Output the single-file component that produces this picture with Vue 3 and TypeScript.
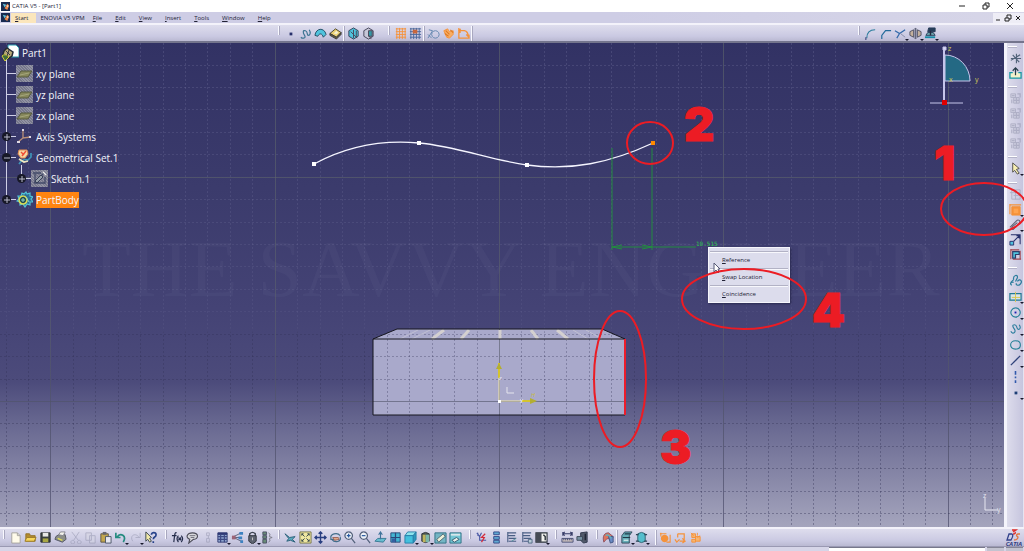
<script setup lang="ts">
type Shape = [d: string, fill?: string, stroke?: string, width?: number]
interface Tool { label: string; shapes: Shape[]; faded?: boolean; more?: boolean }
interface Group { tools: Tool[]; kind?: 'plain' | 'line'; }

const N = 'none'
const navy = '#27306b'
const teal = '#2b7d9d'
const cyan = '#4fc3dd'
const orange = '#f5923a'
const grey = '#8d8fa8'

const t = (label: string, shapes: Shape[], more = false, faded = false): Tool => ({ label, shapes, more, faded })

const box: Shape[] = [
  ['M2 2H7V6H2ZM5 6H11V12H5Z', '#c9cad9', grey],
  ['M9 2H12V6M3 8V12M5 9H11M8 6V12M3 4H6', N, grey, 1.3],
]
const gears: Shape[] = [
  ['M3 3h4v4H3zM7 6h5v5H7zM3 9h4v3H3z', '#f7b56f', orange],
  ['M2 2l3 3M9 2v3M12 5l-3 2', N, orange],
]

const topLeft: Group[] = [
  { tools: [
    t('Point', [['M6 6h3v3H6z', navy]]),
    t('Spline', [['M2 11C4 13 8 12 6 9C4 6 4 3 7 4C10 5 8 9 10 9S13 6 11 3', N, '#3d7593', 1.3]]),
    t('Surface', [['M1 9C2 1 11 0 13 8L10 11C9 7 6 6 4 10Z', cyan, '#234b62']]),
    t('Solid', [['M1 7L7 2L13 6L8 11Z', '#e9cf72', '#4b4630'], ['M1 7V9L8 13L13 8V6L8 11Z', '#635d44', '#3a3a3a'], ['M5 7L8 4L10 6L8 8Z', '#f6efcd']]),
  ] },
  { kind: 'line', tools: [
    t('Isolate', [['M2 4L7 1L12 4V10L7 13L2 10Z', cyan, '#314057'], ['M7 3v9M4 5l7 7M10 4v7', '#9b836d', '#4a4458']]),
    t('Cut part', [['M2 4L7 1L12 4V10L7 13L2 10Z', '#c7c7d8', '#424257'], ['M7 4h4v6H7zM7 9l3 4', '#3597a5', '#4a4458']]),
  ] },
  { tools: [
    t('Grid', [['M2 2H13M2 5H13M2 8H13M2 11H13M3 1V13M6 1V13M9 1V13M12 1V13', N, orange]]),
    t('Snap to point', [['M1 2H13M1 5H13M1 8H13M1 11H13M2 1V13M5 1V13M8 1V13M11 1V13', N, '#4a6799'], ['M4 3h5v4H4z', '#c8663b']]),
  ] },
  { kind: 'line', tools: [
    t('Construction element', [['M1 12L6 4L2 3M9 4a4 4 0 1 0 .1 0M1 8l4 4', N, '#6084ad']]),
    t('Geometrical constraints', [['M2 4L6 2L8 5L12 4V8L8 12L5 11Z', '#f8ad63', orange], ['M4 4l4 4M9 3l3 3M3 7l4 3', N, '#df7a22', 1.2]]),
    t('Dimensional constraints', [['M2 1V12H13V9M2 4H8Q12 5 12 10M10 8L12 10L13 8M4 2L2 4L4 6', N, orange, 1.4]]),
  ] },
]

const topRight: Tool[] = [
  t('Corner', [['M3 12C3 6 6 3 12 3', N, teal, 1.2], ['M2 11v3', N, navy]]),
  t('Chamfer', [['M3 13V9L7 4H13', N, '#246b9b', 1.3]]),
  t('Trim', [['M1 4L6 7L12 3M3 12L6 7', N, '#3269aa', 1.3], ['M7 7L12 11', N, '#858aa5']], true),
  t('Mirror', [['M6 1h2v12H6z', '#63677d'], ['M1 5L5 3V11L1 9ZM13 5L9 3V11L13 9Z', '#c4b19d', '#4d5062']], true),
  t('Project', [['M5 1h7v4H4z', '#263d59', '#263d59'], ['M4 6h6l2 3H2z', '#71a9b2', '#263d59'], ['M1 11H12', N, '#198da7', 2], ['M7 4v5', N, '#222b40', 1.5]], true),
]

const side: Group[] = [
  { tools: [
    t('Sketcher', [['M2 9L12 3M4 3l7 8M2 7h11M8 2v10', N, '#52647a', 1.2]]),
    t('Exit workbench', [['M4 6H1V12H13V6H10', '#f4f1cc', '#1597a5', 1.4], ['M7 9V1M4 4L7 1L10 4', N, '#273c49', 1.3]]),
  ] },
  { tools: [
    t('View 1', box, false, true), t('View 2', box, false, true), t('View 3', box, false, true), t('View 4', box, false, true),
  ] },
  { tools: [t('Select', [['M4 1V11L6 9L9 13L11 12L8 8L11 7Z', '#f8efb2', '#4e4d49']], true)] },
  { tools: [
    t('Constraint dialog', [['M3 2h9v10H3zM1 5h11M5 8h7M7 2v10', N, grey]], false, true),
    t('Constraint', [['M3 4h9v9H3z', orange, orange], ['M1 2H13M1 1V12', N, orange, 1.3], ['M5 6h5v5H5z', '#ffa450']], true),
    t('Contact constraint', [['M1 10L8 3C10 1 13 3 11 6L5 12C3 13 2 11 4 9L9 5', N, '#606274', 1.2]], true),
    t('Fix together', [['M2 2H12V12M5 9L11 3M8 3h3v3', N, navy, 1.1], ['M1 9h4v4H1z', cyan, navy]]),
    t('Auto constraint', [['M2 2h9M2 1v11M4 12h9M12 3v9', N, '#a1434d', 1.2], ['M4 4h7v3H7v4H4z', cyan, '#303d6b', 1.3]]),
  ] },
  { tools: [
    t('Profile', [['M2 9L5 6M3 12C0 10 3 8 5 9M5 6C4 1 10 0 9 4L7 8M9 8C12 4 15 8 12 11C10 13 7 12 8 10', N, teal, 1.3]]),
    t('Rectangle', [['M1 4h12v7H1z', '#d7e3eb', '#217994', 1.3], ['M7 2v11M3 8h9', N, '#d9c74e']], true),
    t('Circle', [['M7 2a5 5 0 1 0 .1 0', N, '#268099', 1.2], ['M6 6h2v2H6z', '#1d1db1']], true),
    t('Curve', [['M2 10C4 14 8 11 6 8C4 5 3 3 6 3S8 8 10 8S13 6 11 3', N, teal, 1.2]], true),
    t('Ellipse', [['M7 3C14 3 14 12 7 12S0 3 7 3', N, '#258097', 1.2]], true),
    t('Line', [['M2 12L12 2', N, '#30437a', 1.4]], true),
    t('Axis', [['M7 1V5M7 7V9M7 11V14', N, '#3059ac', 1.7]], false),
    t('Sketch point', [['M6 6h3v3H6z', '#1d3f76']], true),
  ] },
]

const lens: Shape = ['M5 1a4 4 0 1 0 .1 0M8 8l4 5', '#edf1f7', '#52607a', 1.3]
const tree: Shape = ['M3 2h9M3 5h8M4 8h8M4 11h8M3 1v11', N, '#4a5f85', 1.2]
const bottom: Group[] = [
  { tools: [
    t('New', [['M3 2H9L12 5V13H3Z', '#fffbea', '#a4a29e'], ['M9 2V5H12', N, '#a4a29e']]),
    t('Open', [['M2 3H6L7 5H12V11H2Z', '#b38b2f', '#927127'], ['M3 7H13L11 11H1Z', '#f7d65b', '#9d7c2c']]),
    t('Save', [['M2 2H12V12H2Z', '#3b4140', '#282c30'], ['M4 2h6v4H4z', '#e8e8e6'], ['M4 8h6v4H4z', '#a9a744']]),
    t('Print', [['M2 6L5 4H12L13 9L9 12L1 9Z', '#8b8e88', '#535665'], ['M5 4L7 1H12L10 5Z', '#f4f4ed', '#85858d'], ['M4 8L9 10', N, '#e1dd57', 1.5]]),
    t('Cut', [['M3 1L10 10M11 1L5 10M4 10a2 2 0 1 0 .1 0M11 10a2 2 0 1 0 .1 0', N, grey]], false, true),
    t('Copy', [['M2 2h6v8H2zM6 5h6v8H6z', '#d7d7e4', grey]], false, true),
    t('Paste', [['M2 3h8v9H2z', '#c2a64e', '#5c5547'], ['M7 6h6v7H7z', '#e6e6ef', '#4c5468'], ['M4 1h4v3H4z', '#67666d']]),
    t('Undo', [['M2 2V7H7M3 7C7 1 14 5 10 12', N, '#238b7f', 1.8]], true),
    t('Redo', [['M12 2V7H7M11 7C7 1 0 5 4 11', N, grey]], true, true),
    t("What's this", [['M2 1V11L4 9L6 12L8 11L6 8L8 7Z', '#f2e9a9', '#37444f'], ['M8 4C8 1 13 1 13 4S10 6 10 9M10 11v2', N, '#27438b', 1.8]]),
  ] },
  { tools: [
    t('Formula', [['M6 2C4 1 4 4 3 12M1 5H6M8 5Q5 8 8 12M11 5Q14 8 11 12M8 7L11 10M11 7L8 10', N, '#252d4b', 1.3]]),
    t('Comment', [['M7 2C14 2 14 9 8 9L3 13L4 9C-1 7 1 2 7 2', '#d8d8dd', '#4b4b57', 1.2], ['M4 5H10M5 7H9', N, '#6e6e78']]),
    t('Knowledge', [['M6 2h3v3H6zM6 8h3v4H6zM8 5v3', N, grey]], false, true),
    t('Design table', [['M2 2h10v10H2z', '#8fa6d0', '#343c70'], ['M2 3h10', N, '#2d3775', 2.4], ['M2 6h10M2 9h10M5 4v8M9 4v8', N, '#3d4984', 1.3]], true),
    t('Relations', [['M3 6L11 2M3 7L10 7M3 7L11 11', N, '#5a6078'], ['M1 5h4v4H1z', '#9c6476'], ['M9 1h4v3H9zM8 6h4v3H8zM10 10h3v3h-3z', '#3d81c0']]),
    t('Lock', [['M4 6V3Q7 0 10 3V6', N, '#3d4250', 1.5], ['M3 5h8v6l-4 3-4-3z', '#5e6370', '#30343d'], ['M7 7v3', N, '#ccc']], true),
    t('Equivalent dimensions', [['M2 1h4v3H2zM2 5h4v3H2zM2 9h4v4H2z', '#688b77', '#4b5163'], ['M8 2Q11 3 9 6L12 7L9 8Q11 11 8 12', N, '#7b7b87']]),
  ] },
  { tools: [
    t('Fly', [['M1 3L6 7L12 6L9 9L12 12L7 10L3 11L5 8Z', '#58a9bd', '#2d607a']]),
    t('Fit all', [['M1 1h12v12H1z', '#eee6a0', '#777548'], ['M3 3L6 6M11 3L8 6M3 11L6 8M11 11L8 8M3 5V3H5M9 3H11V5M3 9V11H5M9 11H11V9', N, '#35454a']]),
    t('Pan', [['M7 1V13M1 7H13M5 3L7 1L9 3M5 11L7 13L9 11M3 5L1 7L3 9M11 5L13 7L11 9', N, '#293f80', 1.5]]),
    t('Rotate', [['M2 8C1 3 9 1 12 5M12 6C14 12 6 13 3 9M2 5V9H6', N, '#426d8a', 1.2], ['M4 7H10L11 9L6 10Z', '#e2a788', '#9b6458']]),
    t('Zoom in', [lens, ['M3 5H7M5 3V7', N, '#285ba1', 1.3]]),
    t('Zoom out', [lens, ['M3 5H7', N, '#285ba1', 1.3]]),
    t('Normal view', [['M1 11L4 8H13L10 12Z', '#68bdd0', '#387994'], ['M7 9V1M5 4L7 1L9 4', N, '#40739a', 1.2]]),
    t('Multi view', [['M2 2h10v10H2z', '#43b4d2', '#294778'], ['M7 2V12M2 7H12', N, '#294778', 1.3], ['M3 8h4v4H3z', '#345fa0']]),
    t('Isometric view', [['M1 5L4 1H13L10 5Z', '#8de3ec', '#287eaa'], ['M1 5H10V13H1Z', '#43c0dd', '#287eaa'], ['M10 5L13 1V9L10 13Z', '#2c98bb', '#287eaa']], true),
    t('View mode', [['M3 3Q7 0 11 3V11Q7 14 3 11Z', '#515956', '#30353b'], ['M7 4h4v8H7z', '#7cb7a9'], ['M4 4h3v8H4z', '#c0b45b']], true),
    t('Hide / show', [['M1 2h12v11H1z', '#74b5c4', '#306f83'], ['M3 9L10 3L12 6L5 12Z', '#ecefd7', '#4c6570']]),
    t('Swap visible space', [['M1 2h12v11H1z', '#72c5d3', '#306f83'], ['M3 10L8 7L11 9L6 12Z', '#e7efe8', '#355770'], ['M2 4h10', N, '#d6e6eb', 2]]),
  ] },
  { tools: [
    t('Create datum', [['M2 2L5 6L7 2M5 6V10H12M3 2v3', N, '#4b59a5', 1.2], ['M11 3L7 7H10L7 12', N, '#d42b3a', 1.3]]),
    t('Stack', [['M4 1h6v3H4zM4 6h6v3H4zM4 10h6v3H4z', '#60a9d1', '#344b89']]),
    t('Insert before', [tree, ['M7 11L12 8', N, '#58939c']]),
    t('Insert after', [tree, ['M9 9h4v4H9z', '#b9ccd8', '#536b84']]),
    t('Only current body', [['M1 2h12v10H1z', '#f2f2ee', '#2d343d', 1.2], ['M1 2h6v10H1z', '#464b55'], ['M9 4l2 2v4', N, '#2c333b', 1.5]], true),
  ] },
  { tools: [
    t('Measure between', [['M2 1V5M12 1V5M2 3H12M4 1L2 3L4 5M10 1L12 3L10 5', N, '#363b67', 1.2], ['M1 8h12v4H1z', '#cabfbd', '#495078'], ['M3 8v2M5 8v2M7 8v2M9 8v2M11 8v2', N, '#495078']]),
    t('Measure item', [['M5 2L12 1V12L8 13L5 10Z', '#51596a', '#30374c'], ['M1 6h6v4H1z', '#7892a4', '#3d4858'], ['M10 3v7', N, '#202536', 1.5]]),
  ] },
  { tools: [t('Apply material', [['M2 12C0 5 3 2 7 2L12 6L10 12C9 8 6 6 2 12Z', '#dd745e', '#8b5264'], ['M7 6L12 6V12L9 13Z', '#6a8bc5', '#405583'], ['M4 5Q7 3 10 8', N, '#63b0bc', 1.6]])] },
  { kind: 'line', tools: [
    t('Cut plane', [['M2 5L5 1H13L10 5V13H2Z', '#67aeb8', '#31495c'], ['M3 7H11M5 3h6', N, '#203a49', 1.3], ['M4 10h5', N, '#c9e4e6', 1.5]], true),
    t('Visualization', [['M3 3Q7 0 11 3V11Q7 14 3 11Z', '#55becd', '#31606f'], ['M1 4h3M10 4h3M1 11h3M10 11h3', N, '#31485a', 1.3]], true),
  ] },
  { kind: 'line', tools: [
    t('Sketch solving', [['M6 4a4 4 0 1 0 .1 0', orange], ['M1 3h7M12 4V12H8M2 2v4', N, orange, 1.2]]),
    t('Sketch analysis', [['M4 3H11V11H6M4 7V3M1 9L3 12L6 9M9 8L12 11L9 13', N, orange, 1.3]]),
    t('Animate', gears),
  ] },
]

const menus = ['File', 'Edit', 'View', 'Insert', 'Tools', 'Window', 'Help']
const popup = ['Reference', 'Swap Location', 'Coincidence']

const planeIcon: Shape[] = [['M1 12L5 6H16L12 12Z', '#85865a', '#55583f'], ['M4 10L13 8', N, '#a5a67c']]
const nodes: { name: string; icon: string; shapes: Shape[]; sign?: string; child?: boolean; active?: boolean }[] = [
  { name: 'xy plane', icon: 'muted', shapes: planeIcon },
  { name: 'yz plane', icon: 'muted', shapes: planeIcon },
  { name: 'zx plane', icon: 'muted', shapes: planeIcon },
  { name: 'Axis Systems', icon: '', sign: 'M1 4H7M4 1V7', shapes: [['M7 2V10L15 9M7 10L2 14', N, '#b98f78', 1.3], ['M6 1h2v2H6zM13 8h2v2h-2zM1 13h3v2H1z', '#ddd8e4']] },
  { name: 'Geometrical Set.1', icon: '', sign: 'M1 4H7', shapes: [['M3 1H11L12 5L9 9H5L2 5Z', '#f7d9a4', '#e08a52'], ['M5 3L8 6M10 2L6 7', N, '#f24d35', 1.4], ['M3 15Q7 9 12 11L15 8V4', N, '#3f94b8', 1.7], ['M3 10L8 13L12 12', N, '#efe7c0', 1.8]] },
  { name: 'Sketch.1', icon: 'muted', sign: 'M1 4H7M4 1V7', child: true, shapes: [['M2 3H10M3 13L13 3M4 4V13H14V7', N, '#434b69', 1.3], ['M4 11L10 5L12 7L6 13Z', '#98a1aa', '#384058'], ['M12 2L15 5', N, '#eee', 1.3]] },
  { name: 'PartBody', icon: '', sign: 'M1 4H7M4 1V7', active: true, shapes: [
    ['M10 1L11 3L14 2L14 5L17 6L15 8L17 11L14 11L14 14L11 13L9 16L7 13L4 14L4 11L1 10L3 8L2 5L5 5L6 2L8 3Z', '#2b6f9a', '#52c2d6', 1.2],
    ['M7 5a4 4 0 1 0 .1 0', '#1f4a50', '#d9dc55', 1.6], ['M7 7v4M5 9h4M10 6l3 5', N, '#8fd5c0'],
  ] },
]

const steps = Array.from({ length: 47 }, (_, i) => i - 23)
const columns = steps.map(i => ({ major: i % 10 === 0, at: Math.round(499 + i * 22.43) }))
const rows = steps.filter(i => i >= -16 && i <= 6).map(i => ({ major: i % 10 === 0, at: Math.round(401 + i * 22.43) }))
</script>

<template>
  <div class="app">
    <header class="title">
      <svg class="logo" viewBox="0 0 10 10"><path d="M0 0h10v10H0z" fill="#182b50" /><path d="M2 2l4 1-2 3z" fill="#64c3d9" /><path d="M4 7l3-5 2 2-2 5z" fill="#ef8a4b" /><path d="M6 4h2v2z" fill="#fff" /></svg>
      <span class="caption">CATIA V5 - [Part1]</span>
      <div class="window-buttons">
        <button aria-label="Minimize"><svg viewBox="0 0 10 10"><path d="M2 5h6" /></svg></button>
        <button aria-label="Restore"><svg viewBox="0 0 10 10"><path d="M2 4h4v4H2zM4 4V2h4v4H6" /></svg></button>
        <button aria-label="Close"><svg viewBox="0 0 10 10"><path d="M2 2l6 6M8 2L2 8" /></svg></button>
      </div>
    </header>

    <nav class="menubar" aria-label="Main menu">
      <svg class="logo" viewBox="0 0 10 10"><path d="M0 0h10v10H0z" fill="#182b50" /><path d="M2 2l4 1-2 3z" fill="#64c3d9" /><path d="M4 7l3-5 2 2-2 5z" fill="#ef8a4b" /><path d="M6 4h2v2z" fill="#fff" /></svg>
      <button class="start"><u>S</u>tart</button>
      <button class="enovia">ENOVIA V5 VPM</button>
      <button v-for="m in menus" :key="m"><u>{{ m[0] }}</u>{{ m.slice(1) }}</button>
      <div class="document-buttons">
        <button aria-label="Minimize document"><svg viewBox="0 0 10 10"><path d="M3 7h4" /></svg></button>
        <button aria-label="Restore document"><svg viewBox="0 0 10 10"><path d="M2 5h4v3H2zM4 5V2h4v4H6" /></svg></button>
        <button aria-label="Close document"><svg viewBox="0 0 10 10"><path d="M3 3l4 4M7 3L3 7" /></svg></button>
      </div>
    </nav>

    <div class="toolbar top">
      <div v-for="(g, gi) in topLeft" :key="gi" class="group" :class="g.kind">
        <button v-for="tool in g.tools" :key="tool.label" class="tool" :class="{ faded: tool.faded }" :aria-label="tool.label">
          <svg viewBox="0 0 14 14"><path v-for="(s, i) in tool.shapes" :key="i" :d="s[0]" :fill="s[1]" :stroke="s[2] ?? 'none'" :stroke-width="s[3] ?? 1" /></svg>
        </button>
      </div>
      <div class="group end"></div>
      <div class="group last">
        <button v-for="tool in topRight" :key="tool.label" class="tool" :class="{ more: tool.more }" :aria-label="tool.label">
          <svg viewBox="0 0 14 14"><path v-for="(s, i) in tool.shapes" :key="i" :d="s[0]" :fill="s[1]" :stroke="s[2] ?? 'none'" :stroke-width="s[3] ?? 1" /></svg>
        </button>
      </div>
    </div>

    <div class="work">
      <main class="viewport">
        <svg class="scene" viewBox="0 43 1004 484" preserveAspectRatio="xMinYMin slice" aria-label="Part geometry">
          <defs>
            <linearGradient id="sky" x1="0" y1="0" x2="0" y2="1">
              <stop offset="0" stop-color="#323264" /><stop offset=".3" stop-color="#3b3b6c" /><stop offset=".55" stop-color="#444375" />
              <stop offset=".7" stop-color="#4c4b7b" /><stop offset=".78" stop-color="#66668f" /><stop offset=".9" stop-color="#8888a8" /><stop offset="1" stop-color="#a5a5bd" />
            </linearGradient>
            <linearGradient id="minor" gradientUnits="userSpaceOnUse" x1="0" y1="43" x2="0" y2="527">
              <stop offset="0" stop-color="#9a9ac0" stop-opacity=".2" /><stop offset=".5" stop-color="#9a9ac0" stop-opacity=".12" />
              <stop offset=".58" stop-color="#9a9ac0" stop-opacity=".08" /><stop offset=".6" stop-color="#2c2c50" stop-opacity=".3" /><stop offset="1" stop-color="#2c2c50" stop-opacity=".38" />
            </linearGradient>
            <linearGradient id="major" gradientUnits="userSpaceOnUse" x1="0" y1="43" x2="0" y2="527">
              <stop offset="0" stop-color="#66706c" stop-opacity=".5" /><stop offset=".6" stop-color="#5a5f6c" stop-opacity=".6" /><stop offset="1" stop-color="#3c3c5c" stop-opacity=".6" />
            </linearGradient>
          </defs>
          <rect x="0" y="43" width="1004" height="484" fill="url(#sky)" />
          <text class="watermark" x="82" y="296">THE SAVVY ENGINEER</text>
          <path class="slab" d="M373 339L397 329H602L625 339V415H373Z" />
          <g class="grid">
            <line v-for="c in columns" :key="'c' + c.at" :class="{ major: c.major }" :x1="c.at" :x2="c.at" y1="43" y2="527" />
            <line v-for="r in rows" :key="'r' + r.at" :class="{ major: r.major }" x1="0" x2="1004" :y1="r.at" :y2="r.at" />
          </g>
          <path class="ribs thin" d="M400 339L418 330M412 339L430 330M588 339L573 330M602 339L586 330" />
          <path class="ribs" d="M432 339L444 330M461 339L469 330M500 339V330M538 339L531 330M568 339L557 330" />
          <path class="edges" d="M373 339L397 329H602L625 339M373 339H625M373 339V415H625" />
          <path class="picked" d="M625 339V415" />
          <g class="origin">
            <path d="M499 401V372M499 401H528" stroke="#f2e7a8" />
            <path d="M499 363V378M522 401H535" stroke="#d4c42f" stroke-width="2" />
            <path d="M496 369l3-6 3 6zM530 398l7 3-7 3z" fill="#b4ae31" />
            <path d="M507 387V393H514" stroke="#e4e4ed" />
            <path d="M498 400h3v3h-3z" fill="#fff" />
            <text x="499" y="380">z</text><text x="520" y="402">y</text><text class="gold" x="531" y="397">H</text>
          </g>
          <path class="spline" d="M314 164C349 145 386 140 419 143C455 146 491 160 527 165C571 171 610 163 653 143" />
          <path class="knots" d="M312 162h4v4h-4zM417 141h4v4h-4zM525 163h4v4h-4z" />
          <path d="M651 141h4v4h-4z" fill="#ff8a00" />
          <g class="dimension">
            <path d="M612 148V250M652 148V250M612 247H696" />
            <path d="M622 245L612 247L622 249M642 245L652 247L642 249" />
            <text x="696" y="246">10.515</text>
          </g>
          <g class="compass">
            <path d="M945 55a25 26 0 0 1 25 26H945Z" fill="#246984" />
            <path d="M944 49V103" fill="none" stroke-width="2" />
            <path d="M930 103H963" fill="none" />
            <path d="M943 47h3v3h-3z" fill="#d8d8f4" />
            <rect x="942" y="100" width="5" height="5" />
            <text x="948" y="51">z</text><text x="949" y="82">x</text><text x="975" y="82">y</text>
          </g>
          <g class="axes"><path d="M985 498V510H998" /><text x="983" y="498">z</text><text x="997" y="512">y</text></g>
        </svg>

        <div class="tree">
          <button class="root">
            <svg viewBox="0 0 18 18"><path d="M7 1H15L18 4V13H7Z" fill="#fff" stroke="#289bad" /><path d="M3 7L6 4L9 6L12 8L11 12L8 14L5 12L2 10Z" fill="#b8a978" stroke="#262b34" stroke-width="1.5" /><path d="M1 12Q4 9 8 13L4 17Z" fill="#426d39" stroke="#d4cf38" /><path d="M5 7L9 11M8 6L6 12" fill="none" stroke="#3b3c40" /></svg>
            <span>Part1</span>
          </button>
          <ul>
            <li v-for="n in nodes" :key="n.name" :class="{ child: n.child, active: n.active }">
              <span class="branch"><button v-if="n.sign" class="knob" :aria-label="'Toggle ' + n.name"><svg viewBox="0 0 8 8"><path :d="n.sign" /></svg></button></span>
              <button class="node">
                <svg :class="n.icon" viewBox="0 0 17 17"><path v-for="(s, i) in n.shapes" :key="i" :d="s[0]" :fill="s[1]" :stroke="s[2] ?? 'none'" :stroke-width="s[3] ?? 1" /></svg>
                <span>{{ n.name }}</span>
              </button>
            </li>
          </ul>
        </div>

        <div class="popup" role="menu">
          <button v-for="p in popup" :key="p" role="menuitem"><u>{{ p[0] }}</u>{{ p.slice(1) }}</button>
        </div>
        <svg class="pointer" viewBox="0 0 8 12"><path d="M1 1V10L3 8L5 11L6 10L5 7H7Z" fill="#fff" stroke="#555876" /></svg>
      </main>

      <aside class="side">
        <div v-for="(g, gi) in side" :key="gi" class="stack">
          <button v-for="tool in g.tools" :key="tool.label" class="tool" :class="{ faded: tool.faded, more: tool.more }" :aria-label="tool.label">
            <svg viewBox="0 0 14 14"><path v-for="(s, i) in tool.shapes" :key="i" :d="s[0]" :fill="s[1]" :stroke="s[2] ?? 'none'" :stroke-width="s[3] ?? 1" /></svg>
          </button>
        </div>
      </aside>
    </div>

    <div class="toolbar bottom">
      <div v-for="(g, gi) in bottom" :key="gi" class="group" :class="g.kind">
        <button v-for="tool in g.tools" :key="tool.label" class="tool" :class="{ faded: tool.faded, more: tool.more }" :aria-label="tool.label">
          <svg viewBox="0 0 14 14"><path v-for="(s, i) in tool.shapes" :key="i" :d="s[0]" :fill="s[1]" :stroke="s[2] ?? 'none'" :stroke-width="s[3] ?? 1" /></svg>
        </button>
      </div>
      <div class="brand">
        <svg viewBox="0 0 16 12"><path d="M6 1H10L7 3M9 3Q10 5 7 5" fill="none" stroke="#e02c28" stroke-width="1.3" /><path d="M3 5H6Q8 6 5 11H1Z" fill="none" stroke="#32418b" stroke-width="1.3" /><path d="M14 5H12Q9 6 12 8Q12 11 8 11" fill="none" stroke="#e27842" stroke-width="1.4" /></svg>
        <span>CATIA</span>
      </div>
    </div>
    <footer class="status"><input aria-label="Power input"><button aria-label="Command list"></button><button aria-label="Status"></button></footer>

    <svg class="marks" viewBox="0 0 1024 551" preserveAspectRatio="xMinYMin slice" aria-label="Step marks">
      <ellipse cx="984" cy="209" rx="43" ry="26" />
      <ellipse cx="650" cy="143" rx="23" ry="21" />
      <ellipse cx="620" cy="379" rx="26" ry="68" />
      <ellipse cx="744" cy="299" rx="62" ry="30" />
      <text x="934" y="180">1</text><text x="684" y="141">2</text><text x="660" y="464">3</text><text x="812" y="327">4</text>
    </svg>
  </div>
</template>

<style>
body { margin: 0; overflow: hidden; }
</style>

<style scoped>
.app { position: relative; display: flex; flex-direction: column; height: 100vh; background: #cdcce4; color: #222236; font: 6px/10px "Open Sans", "Noto Sans", sans-serif; overflow: hidden; }
button { padding: 0; border: 0; background: none; color: inherit; font: inherit; white-space: nowrap; }
ul { margin: 0; padding: 0; list-style: none; }
u { text-underline-offset: 1px; text-decoration-thickness: 1px; }
.logo { width: 9px; height: 9px; margin-left: 1px; flex: none; }

.title { display: flex; align-items: center; height: 12px; flex: none; background: #fff; }
.caption { margin-left: 2px; }
.window-buttons { display: flex; margin-left: auto; margin-right: 9px; gap: 14px; }
.window-buttons svg, .document-buttons svg { display: block; width: 10px; height: 10px; fill: none; stroke: #222; }

.menubar { display: flex; align-items: center; height: 11px; flex: none; background: linear-gradient(90deg, #cecde5 60%, #d7d6e8); }
.menubar > button { padding: 0 7px 0 6px; }
.menubar > .start { padding: 0 8px 0 4px; margin-left: 1px; background: #fbe6bc; }
.menubar > .enovia { padding: 0 2px 0 4px; }
.document-buttons { display: flex; margin-left: auto; padding: 0 1px 0 0; background: #eeedf6; }

.toolbar { position: relative; display: flex; align-items: center; flex: none; background: linear-gradient(#dedded, #cac9e2 70%, #bab9d2); }
.top { height: 20px; box-sizing: border-box; border-top: 2px solid #f3f2fa; border-bottom: 2px solid #74758d; padding: 0 86px 0 274px; }
.group { position: relative; display: flex; padding-left: 5px; margin-left: 4px; }
.group::before { content: ""; position: absolute; left: 0; top: 0; width: 1px; height: 9px; background: #f9f9ff; border-right: 1px solid #a9a8bf; }
.group.line { margin-left: 0; padding-left: 3px; }
.group.line::before, .group.end::before { height: 15px; top: 0; }
.group.end { height: 15px; margin-left: 0; }
.top .group:nth-child(3) { margin-left: 12px; }
.group.last { margin-left: auto; }
.tool { position: relative; display: flex; align-items: center; justify-content: center; width: 15px; height: 15px; }
.tool svg { width: 13px; height: 13px; }
.tool.faded svg { opacity: .5; }
.tool.more::after { content: ""; position: absolute; right: -1px; bottom: 0; border: 2px solid transparent; border-top: 2px solid #16162a; border-bottom: 0; }

.work { display: flex; flex: 1; min-height: 0; }
.viewport { position: relative; flex: 1; min-width: 0; overflow: hidden; background: #a5a5bd; }
.scene { display: block; width: 100%; height: 100%; }
.watermark { font: 80px "Liberation Serif", serif; fill: #7a7aa8; fill-opacity: .09; }
.grid line { stroke: url(#minor); stroke-dasharray: 2 2; shape-rendering: crispEdges; }
.grid line.major { stroke: url(#major); stroke-dasharray: none; }
.slab { fill: #a9a9cb; }
.ribs { fill: none; stroke: #d4d0d0; stroke-width: 3; }
.ribs.thin { stroke: #c0bfd2; stroke-width: 1; }
.edges { fill: none; stroke: #16161f; stroke-width: 1; }
.picked { stroke: #ec1c2b; stroke-width: 2; }
.origin { fill: none; }
.origin text { fill: #f5f5ff; font: 6px "Open Sans", sans-serif; }
.origin text.gold { fill: #c8bc35; font-style: italic; }
.spline { fill: none; stroke: #f5f5ff; stroke-width: 1.3; }
.knots { fill: #fff; }
.dimension path { fill: none; stroke: #238c40; }
.dimension text { fill: #2cc04e; font: 6px "DejaVu Sans Mono", monospace; }
.compass path { stroke: #c5c5ea; }
.compass rect { fill: #e00000; }
.compass text { fill: #d3cb59; font: 7px "Open Sans", sans-serif; }
.axes path { fill: none; stroke: #e6e6f0; }
.axes text { fill: #e6e6f0; font: 7px "Open Sans", sans-serif; }

.tree { position: absolute; left: 0; top: -1px; color: #f4f4fb; font-size: 10px; line-height: 16px; }
.tree button { display: flex; align-items: center; }
.root { height: 21px; gap: 3px; padding-left: 1px; }
.root svg { width: 18px; height: 18px; }
.tree ul { position: relative; }
.tree ul::before { content: ""; position: absolute; left: 6px; top: -3px; bottom: 10px; width: 1px; background: #cfcfe6; }
.tree li { display: flex; align-items: center; height: 21px; }
.branch { position: relative; width: 10px; height: 1px; margin-left: 6px; background: #cfcfe6; }
.tree .knob { position: absolute; left: -4px; top: -4px; width: 9px; height: 9px; border-radius: 5px; background: #171827; justify-content: center; }
.knob svg { width: 8px; height: 8px; stroke: #b9b9cc; fill: none; }
.tree .child .branch { margin-left: 21px; }
.child .branch::before { content: ""; position: absolute; left: 0; bottom: 0; width: 1px; height: 14px; background: #cfcfe6; }
.node { gap: 3px; }
.node svg { width: 17px; height: 17px; }
.node .muted { background: repeating-linear-gradient(45deg, #77788c, #77788c 1px, #9293a3 1px, #9293a3 2px); }
.active .node span { background: #ff8410; }

.popup { position: absolute; left: 708px; top: 204px; display: flex; flex-direction: column; width: 82px; padding: 3px 1px 0; box-sizing: border-box; background: #dcdcec; border: 1px solid #f5f5fb; box-shadow: 1px 1px 2px #29294f; }
.popup button { height: 17px; padding-left: 12px; text-align: left; border-top: 1px solid #b2b2c5; box-shadow: inset 0 1px #f7f7fc; }
.pointer { position: absolute; left: 713px; top: 219px; width: 8px; height: 12px; }

.side { display: flex; flex-direction: column; width: 20px; flex: none; padding: 3px 1px 0 1px; box-sizing: border-box; border-left: 3px solid #f4f4fb; border-right: 1px solid #e5e4f1; background: linear-gradient(90deg, #dddcec, #c6c5de); }
.stack { position: relative; padding-top: 5px; margin-bottom: 5px; }
.stack::before { content: ""; position: absolute; left: 0; top: 0; width: 9px; height: 1px; background: #fff; border-bottom: 1px solid #b4b3c9; }
.stack:nth-child(3) { margin-bottom: 6px; }
.stack:last-child .tool { height: 16px; }

.bottom { height: 20px; padding-right: 2px; box-sizing: border-box; border-top: 2px solid #f3f2fa; border-bottom: 1px solid #9a99b3; }
.bottom .group { margin-right: 3px; margin-left: 3px; }
.bottom .group:nth-child(2) { margin-left: 4px; }
.bottom .group:nth-child(3) { margin-left: 0; }
.bottom .group.line { margin-left: -3px; }
.bottom .group.line:nth-child(8) { margin-left: 3px; }
.brand { display: flex; flex-direction: column; align-items: center; margin-left: auto; color: #303b80; font: italic bold 6px/6px "Open Sans", sans-serif; }
.brand svg { width: 16px; height: 12px; }
.status { display: flex; justify-content: flex-end; gap: 2px; height: 4px; flex: none; padding-right: 1px; background: #d6d5e8; }
.status input { width: 156px; height: 4px; padding: 0; border: 0; border-top: 1px solid #77778b; background: #fff; box-sizing: border-box; }
.status button { width: 17px; height: 4px; background: #c3c3d0; border-top: 1px solid #858596; }

.marks { position: absolute; inset: 0; width: 100%; height: 100%; pointer-events: none; }
.marks ellipse { fill: none; stroke: #ec1c24; stroke-width: 2; }
.marks text { fill: #ec1c24; stroke: #ec1c24; font: 900 47px Inter, "Noto Sans", sans-serif; }
</style>
